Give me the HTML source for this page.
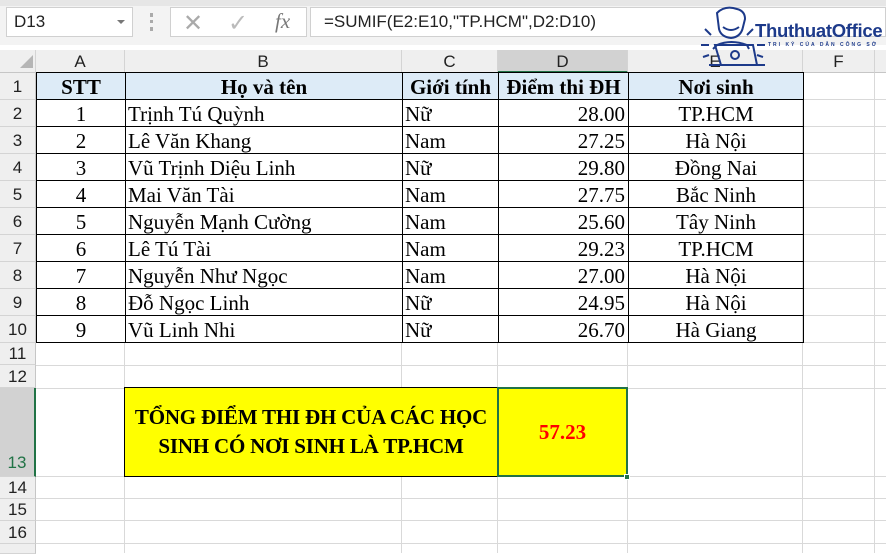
<!DOCTYPE html>
<html><head><meta charset="utf-8"><style>
*{margin:0;padding:0;box-sizing:border-box}
body{width:886px;height:551px;overflow:hidden;background:#fff;position:relative;font-family:"Liberation Serif",serif}
.a{position:absolute}
.ch{position:absolute;top:50px;height:23px;background:#efefef;border-right:1px solid #d4d4d4;border-bottom:1px solid #c6c6c6;font:17px "Liberation Sans",sans-serif;color:#222;text-align:center;line-height:23px}
.rh{position:absolute;left:0;width:36px;background:#efefef;border-bottom:1px solid #d4d4d4;border-right:1px solid #c6c6c6;font:17px "Liberation Sans",sans-serif;color:#222;text-align:center}
.gl{position:absolute;background:#d9d9d9}
</style></head><body>
<div class="a" style="left:0;top:0;width:886px;height:45px;background:#f3f3f3"></div>
<div class="a" style="left:0;top:0;width:886px;height:6px;background:#e6e6e6"></div>
<div class="a" style="left:6px;top:7px;width:127px;height:30px;background:#fff;border:1px solid #d0d0d0;font:17px 'Liberation Sans',sans-serif;line-height:28px;padding-left:7px;color:#222">D13</div>
<div class="a" style="left:117px;top:20px;width:0;height:0;border-left:4px solid transparent;border-right:4px solid transparent;border-top:4px solid #777"></div>
<div class="a" style="left:150px;top:13px;width:3px;height:18px;border-left:3px dotted #aaa"></div>
<div class="a" style="left:170px;top:7px;width:137px;height:30px;background:#fff;border:1px solid #d0d0d0"></div>
<div class="a" style="left:183px;top:9px;font:24px 'Liberation Sans',sans-serif;color:#aaa">✕</div>
<div class="a" style="left:228px;top:9px;font:24px 'Liberation Sans',sans-serif;color:#bbb">✓</div>
<div class="a" style="left:275px;top:9px;font:italic 21px 'Liberation Serif',serif;color:#777">fx</div>
<div class="a" style="left:310px;top:7px;width:576px;height:30px;background:#fff;border:1px solid #d0d0d0;font:17px 'Liberation Sans',sans-serif;line-height:28px;padding-left:13px;color:#222">=SUMIF(E2:E10,"TP.HCM",D2:D10)</div>
<div class="ch" style="left:0;width:36px"></div>
<div class="a" style="left:20px;top:55px;width:0;height:0;border-left:13px solid transparent;border-bottom:13px solid #b5b5b5"></div>
<div class="ch" style="left:36px;width:89px">A</div>
<div class="ch" style="left:125px;width:277px">B</div>
<div class="ch" style="left:402px;width:96px">C</div>
<div class="ch" style="left:498px;width:130px;background:#d2d2d2;border-bottom:2px solid #217346">D</div>
<div class="ch" style="left:628px;width:175px">E</div>
<div class="ch" style="left:803px;width:72px">F</div>
<div class="ch" style="left:875px;width:20px"></div>
<div class="rh" style="top:73px;height:27px;line-height:27px">1</div>
<div class="rh" style="top:100px;height:27px;line-height:27px">2</div>
<div class="rh" style="top:127px;height:27px;line-height:27px">3</div>
<div class="rh" style="top:154px;height:27px;line-height:27px">4</div>
<div class="rh" style="top:181px;height:27px;line-height:27px">5</div>
<div class="rh" style="top:208px;height:27px;line-height:27px">6</div>
<div class="rh" style="top:235px;height:27px;line-height:27px">7</div>
<div class="rh" style="top:262px;height:27px;line-height:27px">8</div>
<div class="rh" style="top:289px;height:27px;line-height:27px">9</div>
<div class="rh" style="top:316px;height:27px;line-height:27px">10</div>
<div class="rh" style="top:343px;height:22px;line-height:22px">11</div>
<div class="rh" style="top:365px;height:23px;line-height:23px">12</div>
<div class="rh" style="top:388px;height:89px;line-height:150px;background:#d2d2d2;border-right:2px solid #217346;color:#217346">13</div>
<div class="rh" style="top:477px;height:22px;line-height:22px">14</div>
<div class="rh" style="top:499px;height:22px;line-height:22px">15</div>
<div class="rh" style="top:521px;height:23px;line-height:23px">16</div>
<div class="rh" style="top:544px;height:10px"></div>
<div class="gl" style="left:36px;top:365px;width:850px;height:1px"></div>
<div class="gl" style="left:36px;top:388px;width:850px;height:1px"></div>
<div class="gl" style="left:36px;top:476px;width:850px;height:1px"></div>
<div class="gl" style="left:36px;top:498px;width:850px;height:1px"></div>
<div class="gl" style="left:36px;top:520px;width:850px;height:1px"></div>
<div class="gl" style="left:36px;top:543px;width:850px;height:1px"></div>
<div class="gl" style="left:802px;top:73px;width:1px;height:480px"></div>
<div class="gl" style="left:874px;top:73px;width:1px;height:480px"></div>
<div class="gl" style="left:802px;top:99px;width:84px;height:1px"></div>
<div class="gl" style="left:802px;top:126px;width:84px;height:1px"></div>
<div class="gl" style="left:802px;top:153px;width:84px;height:1px"></div>
<div class="gl" style="left:802px;top:180px;width:84px;height:1px"></div>
<div class="gl" style="left:802px;top:207px;width:84px;height:1px"></div>
<div class="gl" style="left:802px;top:234px;width:84px;height:1px"></div>
<div class="gl" style="left:802px;top:261px;width:84px;height:1px"></div>
<div class="gl" style="left:802px;top:288px;width:84px;height:1px"></div>
<div class="gl" style="left:802px;top:315px;width:84px;height:1px"></div>
<div class="gl" style="left:36px;top:342px;width:850px;height:1px"></div>
<div class="gl" style="left:124px;top:343px;width:1px;height:210px"></div>
<div class="gl" style="left:401px;top:343px;width:1px;height:210px"></div>
<div class="gl" style="left:497px;top:343px;width:1px;height:210px"></div>
<div class="gl" style="left:627px;top:343px;width:1px;height:210px"></div>
<table class="a" style="left:36px;top:72px;border-collapse:collapse;font-family:'Liberation Serif',serif;font-size:21px">
<colgroup><col style="width:89px"><col style="width:277px"><col style="width:96px"><col style="width:130px"><col style="width:175px"></colgroup>
<style>td{border:1px solid #000;height:27px;padding:0 2px;white-space:nowrap;line-height:24px;vertical-align:bottom}.h td{background:#ddebf7;font-weight:bold;text-align:center}.r{text-align:right;padding-right:3px}.m{text-align:center}</style>
<tr class="h"><td>STT</td><td>Họ và tên</td><td>Giới tính</td><td>Điểm thi ĐH</td><td>Nơi sinh</td></tr>
<tr><td class="m">1</td><td>Trịnh Tú Quỳnh</td><td>Nữ</td><td class="r">28.00</td><td class="m">TP.HCM</td></tr>
<tr><td class="m">2</td><td>Lê Văn Khang</td><td>Nam</td><td class="r">27.25</td><td class="m">Hà Nội</td></tr>
<tr><td class="m">3</td><td>Vũ Trịnh Diệu Linh</td><td>Nữ</td><td class="r">29.80</td><td class="m">Đồng Nai</td></tr>
<tr><td class="m">4</td><td>Mai Văn Tài</td><td>Nam</td><td class="r">27.75</td><td class="m">Bắc Ninh</td></tr>
<tr><td class="m">5</td><td>Nguyễn Mạnh Cường</td><td>Nam</td><td class="r">25.60</td><td class="m">Tây Ninh</td></tr>
<tr><td class="m">6</td><td>Lê Tú Tài</td><td>Nam</td><td class="r">29.23</td><td class="m">TP.HCM</td></tr>
<tr><td class="m">7</td><td>Nguyễn Như Ngọc</td><td>Nam</td><td class="r">27.00</td><td class="m">Hà Nội</td></tr>
<tr><td class="m">8</td><td>Đỗ Ngọc Linh</td><td>Nữ</td><td class="r">24.95</td><td class="m">Hà Nội</td></tr>
<tr><td class="m">9</td><td>Vũ Linh Nhi</td><td>Nữ</td><td class="r">26.70</td><td class="m">Hà Giang</td></tr>
</table>
<div class="a" style="left:124px;top:387px;width:374px;height:90px;background:#ffff00;border:1px solid #000;display:flex;align-items:center;justify-content:center;text-align:center;font:bold 21px/29px 'Liberation Serif',serif;letter-spacing:-0.2px">TỔNG ĐIỂM THI ĐH CỦA CÁC HỌC<br>SINH CÓ NƠI SINH LÀ TP.HCM</div>
<div class="a" style="left:497px;top:387px;width:131px;height:90px;background:#ffff00;border:2px solid #217346;display:flex;align-items:center;justify-content:center;font:bold 21px 'Liberation Serif',serif;color:#ff0000">57.23</div>
<div class="a" style="left:624px;top:474px;width:6px;height:6px;background:#217346;border:1px solid #fff"></div>
<svg class="a" style="left:695px;top:5px" width="90" height="62" viewBox="0 0 90 62" fill="none" stroke="#1d3a8a" stroke-width="2">
<path d="M22 8 Q30 0 42 4 Q50 6 50 14 L48 22 Q46 32 36 33 Q26 32 24 24 Z"/>
<path d="M28 22 Q36 28 44 22"/>
<path d="M18 44 L22 40 Q36 34 52 40 L54 44"/>
<path d="M20 40 L26 60 L62 60 L58 40 Z"/>
<circle cx="40" cy="50" r="4"/>
<path d="M14 60 L70 60"/>
<path d="M10 24 L16 30 M6 40 L14 40 M8 52 L14 50 M58 24 L52 30 M62 40 L70 40 M62 50 L68 52"/>
</svg>
<div class="a" style="left:755px;top:20px;font:bold 18.5px 'Liberation Sans',sans-serif;color:#1d3a8a;letter-spacing:-0.3px">ThuthuatOffice</div>
<div class="a" style="left:768px;top:42px;font:bold 5px 'Liberation Sans',sans-serif;color:#1d3a8a;letter-spacing:2px">TRI KỶ CỦA DÂN CÔNG SỞ</div>
</body></html>
